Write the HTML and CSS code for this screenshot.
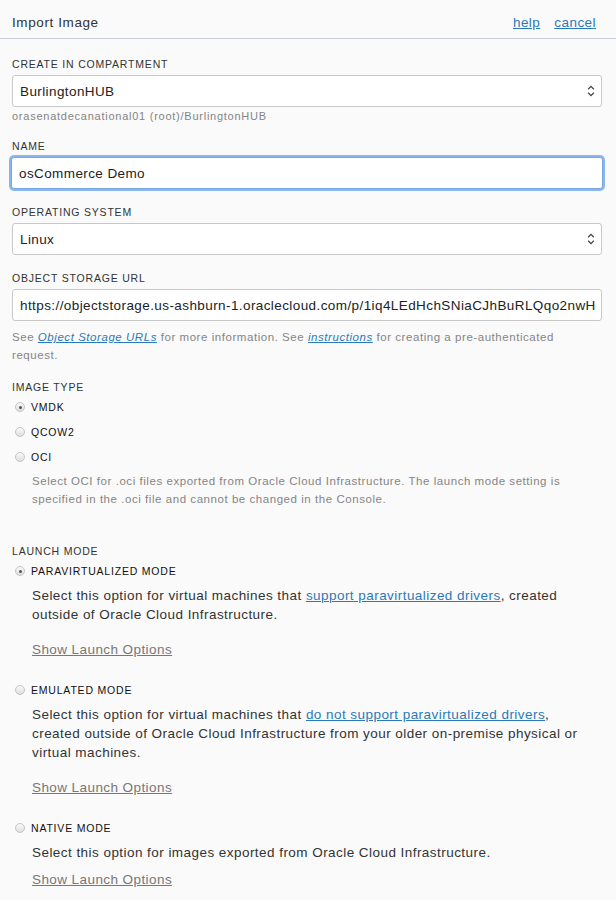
FILE: index.html
```html
<!DOCTYPE html>
<html>
<head>
<meta charset="utf-8">
<link rel="stylesheet" href="styles.css">
</head>
<body>
<div class="panel">
  <header class="head">
    <h1 class="title">Import Image</h1>
    <nav class="head-links"><a href="#">help</a><a href="#">cancel</a></nav>
  </header>
  <form class="form">
    <div class="field">
      <label class="label">Create in Compartment</label>
      <div class="select"><span>BurlingtonHUB</span><svg class="updown" width="8" height="12" viewBox="0 0 8 12"><path d="M1.2 4.2 L4 1.4 L6.8 4.2 M1.2 7.8 L4 10.6 L6.8 7.8" fill="none" stroke="#444" stroke-width="1.3"/></svg></div>
      <div class="path">orasenatdecanational01 (root)/BurlingtonHUB</div>
    </div>
    <div class="field f-name">
      <label class="label">Name</label>
      <div class="input focus">osCommerce Demo</div>
    </div>
    <div class="field f-os">
      <label class="label">Operating System</label>
      <div class="select"><span>Linux</span><svg class="updown" width="8" height="12" viewBox="0 0 8 12"><path d="M1.2 4.2 L4 1.4 L6.8 4.2 M1.2 7.8 L4 10.6 L6.8 7.8" fill="none" stroke="#444" stroke-width="1.3"/></svg></div>
    </div>
    <div class="field f-url">
      <label class="label">Object Storage URL</label>
      <div class="input url">https://objectstorage.us-ashburn-1.oraclecloud.com/p/1iq4LEdHchSNiaCJhBuRLQqo2nwH</div>
      <p class="help">See <a href="#" class="ilink">Object Storage URLs</a> for more information. See <a href="#" class="ilink">instructions</a> for creating a pre-authenticated request.</p>
    </div>
    <div class="field f-type">
      <label class="label">Image Type</label>
      <div class="radios">
        <div class="radio"><span class="dot on"></span><span class="rlabel">VMDK</span></div>
        <div class="radio"><span class="dot"></span><span class="rlabel">QCOW2</span></div>
        <div class="radio"><span class="dot"></span><span class="rlabel">OCI</span></div>
      </div>
      <p class="help indent">Select OCI for .oci files exported from Oracle Cloud Infrastructure. The launch mode setting is specified in the .oci file and cannot be changed in the Console.</p>
    </div>
    <div class="field f-launch">
      <label class="label">Launch Mode</label>
      <div class="mode">
        <div class="radio"><span class="dot on"></span><span class="rlabel">Paravirtualized Mode</span></div>
        <p class="desc">Select this option for virtual machines that <a href="#" class="link">support paravirtualized drivers</a>, created outside of Oracle Cloud Infrastructure.</p>
        <a href="#" class="show">Show Launch Options</a>
      </div>
      <div class="mode">
        <div class="radio"><span class="dot"></span><span class="rlabel">Emulated Mode</span></div>
        <p class="desc">Select this option for virtual machines that <a href="#" class="link">do not support paravirtualized drivers</a>, created outside of Oracle Cloud Infrastructure from your older on-premise physical or virtual machines.</p>
        <a href="#" class="show">Show Launch Options</a>
      </div>
      <div class="mode">
        <div class="radio"><span class="dot"></span><span class="rlabel">Native Mode</span></div>
        <p class="desc">Select this option for images exported from Oracle Cloud Infrastructure.</p>
        <a href="#" class="show tight">Show Launch Options</a>
      </div>
    </div>
  </form>
</div>
</body>
</html>
```
FILE: styles.css
```css
html, body {
  margin: 0;
  padding: 0;
  background: #fafafa;
}
body {
  font-family: "Liberation Sans", Arial, sans-serif;
  color: #333;
}
.panel {
  width: 616px;
}
.head {
  box-sizing: border-box;
  height: 39px;
  display: flex;
  align-items: center;
  justify-content: space-between;
  padding: 6px 20px 0 12px;
  border-bottom: 1px solid #c9ced4;
}
.title {
  margin: 0;
  font-size: 13.5px;
  letter-spacing: 0.6px;
  font-weight: normal;
  color: #333;
}
.head-links {
  display: flex;
  gap: 14px;
}
.head-links a {
  font-size: 13.5px;
  letter-spacing: 0.45px;
  color: #2a7ab9;
  text-decoration: underline;
}
.form {
  padding: 18px 14px 0 12px;
}
.field {
  display: flex;
  flex-direction: column;
}
.label {
  font-size: 10.5px;
  line-height: 14px;
  text-transform: uppercase;
  letter-spacing: 0.8px;
  color: #333;
  margin-bottom: 4px;
}
.select, .input {
  box-sizing: border-box;
  height: 32px;
  background: #fff;
  border: 1px solid #c8c8c8;
  border-radius: 3px;
  display: flex;
  align-items: center;
  justify-content: space-between;
  padding: 0 6px 0 7px;
  font-size: 13.5px;
  letter-spacing: 0.4px;
  color: #222;
}
.updown {
  display: block;
}
.path {
  font-size: 11px;
  letter-spacing: 0.75px;
  line-height: 14px;
  color: #858585;
  margin-top: 2px;
}
.f-name {
  margin-top: 16px;
}
.input.focus {
  border-color: #7aa7e0;
  box-shadow: 0 0 0 2px #8ab6ee;
  margin: 0 -1px;
}
.f-os {
  margin-top: 16px;
}
.f-url {
  margin-top: 16px;
}
.input.url {
  white-space: nowrap;
  overflow: hidden;
  letter-spacing: 0.41px;
}
.help {
  margin: 7px 0 0;
  font-size: 11.5px;
  letter-spacing: 0.55px;
  line-height: 18px;
  color: #858585;
}
.ilink {
  color: #2a7ab9;
  font-style: italic;
}
.f-type {
  margin-top: 16px;
}
.radios {
  display: flex;
  flex-direction: column;
  gap: 11px;
  margin-top: 2px;
}
.radio {
  display: flex;
  align-items: center;
  height: 14px;
  gap: 6px;
  padding-left: 3px;
}
.dot {
  box-sizing: border-box;
  width: 10px;
  height: 10px;
  border-radius: 50%;
  border: 1px solid #c4c4c4;
  background: linear-gradient(#fafafa, #dedede);
  position: relative;
  flex: none;
}
.dot.on::after {
  content: "";
  position: absolute;
  left: 2.5px;
  top: 2.5px;
  width: 3px;
  height: 3px;
  border-radius: 50%;
  background: #555;
}
.rlabel {
  font-size: 10.5px;
  text-transform: uppercase;
  color: #111;
  letter-spacing: 0.8px;
}
.help.indent {
  margin: 8px 0 0 20px;
}
.f-launch {
  margin-top: 36px;
}
.f-launch .label {
  margin-bottom: 6px;
}
.mode {
  display: flex;
  flex-direction: column;
  margin-bottom: 25px;
}
.desc {
  margin: 8px 14px 0 20px;
  font-size: 13.5px;
  letter-spacing: 0.45px;
  line-height: 19px;
  color: #333;
}
.link {
  color: #2a7ab9;
  text-decoration: underline;
}
.show {
  margin: 18px 0 0 20px;
  font-size: 13.5px;
  letter-spacing: 0.42px;
  line-height: 16px;
  color: #777;
  text-decoration: underline;
  align-self: flex-start;
}
.show.tight {
  margin-top: 10px;
}
```
